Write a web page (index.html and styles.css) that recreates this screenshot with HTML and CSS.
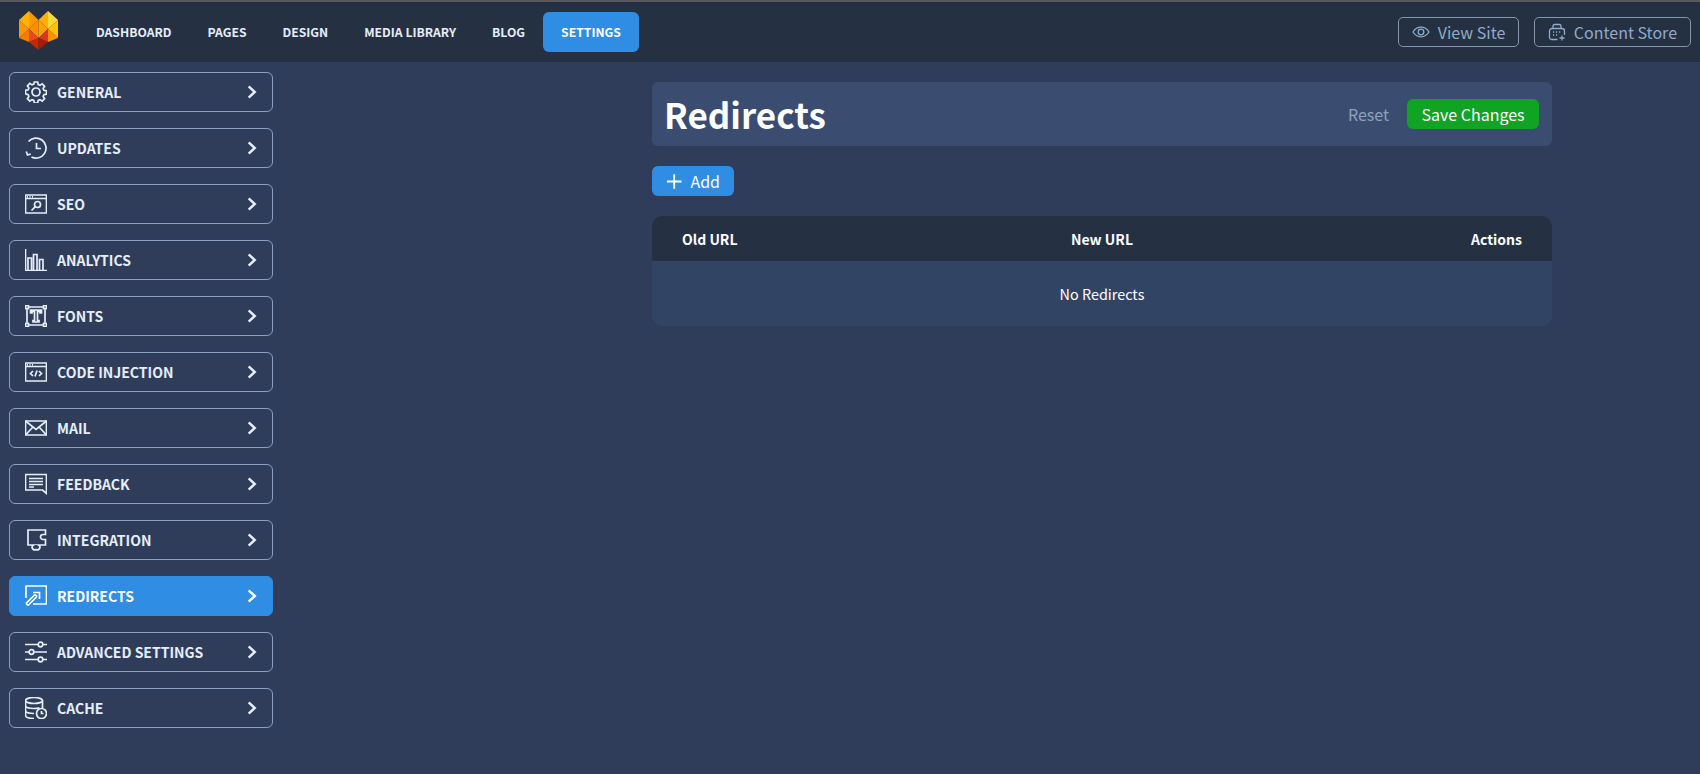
FILE: index.html
```html
<!DOCTYPE html>
<html lang="en">

<head>
     <meta charset="UTF-8">
     <title>Redirects</title>
     <link rel="stylesheet" href="styles.css">
</head>

<body>

     <header class="topbar">
          <svg class="logo" viewBox="0 0 39 39">
               <polygon points="0,9 10,0 10,18" fill="#ffb300" />
               <polygon points="10,0 19.5,9 10,18" fill="#ff9800" />
               <polygon points="19.5,9 29,0 29,18" fill="#ffb300" />
               <polygon points="29,0 39,9 29,18" fill="#ffd83b" />
               <polygon points="10,18 19.5,9 19.500,27" fill="#ff8f00" />
               <polygon points="19.5,9 29,18 19.500,27" fill="#ffa000" />
               <polygon points="0,9 10,18 0,27" fill="#ff9800" />
               <polygon points="39,9 29,18 39,27" fill="#ffc107" />
               <polygon points="0,27 10,18 10,31" fill="#f57c00" />
               <polygon points="10,18 19.5,27 10,31" fill="#e64a19" />
               <polygon points="19.5,27 29,18 29,31" fill="#d8352a" />
               <polygon points="29,18 39,27 29,31" fill="#ff8f00" />
               <polygon points="10,31 19.5,27 19.5,39" fill="#c62800" />
               <polygon points="19.5,27 29,31 19.5,39" fill="#a81c02" />
          </svg>
          <nav class="topnav">
               <a href="#">Dashboard</a>
               <a href="#">Pages</a>
               <a href="#">Design</a>
               <a href="#">Media Library</a>
               <a href="#">Blog</a>
               <a href="#" class="active">Settings</a>
          </nav>
          <div class="top-actions">
               <a href="#" class="outline-btn">
                    <svg viewBox="0 0 18 18">
                         <path d="M1 9c2-3.200 4.700-4.800 8-4.800s6 1.600 8 4.800c-2 3.200-4.700 4.800-8 4.800S3 12.200 1 9z" />
                         <circle cx="9" cy="9" r="2.800" />
                    </svg>
                    View Site
               </a>
               <a href="#" class="outline-btn">
                    <svg viewBox="0 0 18 18">
                         <path d="M5 5.500V3a1.500 1.500 0 0 1 1.500-1.500h5A1.500 1.500 0 0 1 13 3v2.500" />
                         <path d="M9.500 16.500H3.500a2 2 0 0 1-2-2V8A2.500 2.500 0 0 1 4 5.500h10A2.500 2.500 0 0 1 16.500 8v4" />
                         <path d="M5 9h1.200M8 9h1.200M11 9h1.200M5 12h1.200M8 12h1.200M14 12.500v5M11.500 15h5" />
                    </svg>
                    Content Store
               </a>
          </div>
     </header>

     <div class="layout">
          <aside class="sidebar">
               <a href="#" class="side-item">
                    <svg viewBox="0 0 22 22">
                         <path d="M9.300 1h3.400l.5 2.600 1.800.8 2.200-1.500 2.400 2.400-1.500 2.200.8 1.800 2.600.5v3.400l-2.600.5-.8 1.800 1.500 2.200-2.400 2.400-2.200-1.500-1.800.8-.5 2.600H9.300l-.5-2.600-1.800-.8-2.200 1.500-2.400-2.400 1.500-2.200-.8-1.800L.5 12.700V9.300l2.600-.5.8-1.800-1.500-2.200 2.400-2.400L7 3.900l1.800-.8z" />
                         <circle cx="11" cy="11" r="4" />
                    </svg>
                    <span>General</span>
                    <svg class="chevron" viewBox="0 0 9 12"><path d="M1.500 1l5.500 5-5.500 5" /></svg>
               </a>
               <a href="#" class="side-item">
                    <svg viewBox="0 0 22 22">
                         <path d="M3.500 4.500A10 10 0 1 1 6.500 20" />
                         <path d="M1.300 14.500l1.200 3.500 3.300-1" />
                         <path d="M11.500 6v5.500h4.500" />
                    </svg>
                    <span>Updates</span>
                    <svg class="chevron" viewBox="0 0 9 12"><path d="M1.500 1l5.500 5-5.500 5" /></svg>
               </a>
               <a href="#" class="side-item">
                    <svg viewBox="0 0 22 22">
                         <path d="M.5 2h21v18H.5zM.5 5.500h21" />
                         <path d="M2 3.800h1M4.500 3.800h1M7 3.800h1" />
                         <circle cx="12.500" cy="11.500" r="3" />
                         <path d="M10.300 13.700L6.500 17.500" />
                    </svg>
                    <span>SEO</span>
                    <svg class="chevron" viewBox="0 0 9 12"><path d="M1.500 1l5.500 5-5.500 5" /></svg>
               </a>
               <a href="#" class="side-item">
                    <svg viewBox="0 0 22 22">
                         <path d="M.5 0v21.500h21.500" />
                         <path d="M3 21.500V9h3.500v12.500M8.500 21.500V5.500H12v16M14.500 21.500V10.500H18v11" />
                    </svg>
                    <span>Analytics</span>
                    <svg class="chevron" viewBox="0 0 9 12"><path d="M1.500 1l5.500 5-5.500 5" /></svg>
               </a>
               <a href="#" class="side-item">
                    <svg viewBox="0 0 22 22">
                         <path d="M3.500 2h15M3.500 20h15M2 3.500v15M20 3.500v15" />
                         <rect x=".5" y=".5" width="3" height="3" />
                         <rect x="18.500" y=".5" width="3" height="3" />
                         <rect x=".5" y="18.500" width="3" height="3" />
                         <rect x="18.500" y="18.500" width="3" height="3" />
                         <path d="M5.500 5h11v3h-1.500V6.500h-2.500v9h1.500V17h-6v-1.500h1.500v-9H7V8H5.500z" />
                    </svg>
                    <span>Fonts</span>
                    <svg class="chevron" viewBox="0 0 9 12"><path d="M1.500 1l5.500 5-5.500 5" /></svg>
               </a>
               <a href="#" class="side-item">
                    <svg viewBox="0 0 22 22">
                         <path d="M.5 2h21v18H.5zM.5 5.500h21" />
                         <path d="M2 3.800h1M4.500 3.800h1M7 3.800h1" />
                         <path d="M8 10l-2.500 2.500L8 15M14 10l2.500 2.500L14 15M12 9.500l-2 6" />
                    </svg>
                    <span>Code Injection</span>
                    <svg class="chevron" viewBox="0 0 9 12"><path d="M1.500 1l5.500 5-5.500 5" /></svg>
               </a>
               <a href="#" class="side-item">
                    <svg viewBox="0 0 22 22">
                         <path d="M.5 4h21v14H.5z" />
                         <path d="M.5 4L11 12.500 21.500 4M.5 18l7.500-8M21.500 18L14 10" />
                    </svg>
                    <span>Mail</span>
                    <svg class="chevron" viewBox="0 0 9 12"><path d="M1.500 1l5.500 5-5.500 5" /></svg>
               </a>
               <a href="#" class="side-item">
                    <svg viewBox="0 0 22 22">
                         <path d="M.5 1.500h21v19l-4-3.500H.5z" />
                         <path d="M4 5.500h14M4 8.500h14M4 11.500h14M4 14h5" />
                    </svg>
                    <span>Feedback</span>
                    <svg class="chevron" viewBox="0 0 9 12"><path d="M1.500 1l5.500 5-5.500 5" /></svg>
               </a>
               <a href="#" class="side-item">
                    <svg viewBox="0 0 22 22">
                         <path d="M3 1h17.500v4.500h-2.500a2.500 2.500 0 0 0 0 5h2.500v5.500H13.500a2.500 2.500 0 0 1-2.500 4.500 2.500 2.500 0 0 1-2.500-4.500H3z" />
                    </svg>
                    <span>Integration</span>
                    <svg class="chevron" viewBox="0 0 9 12"><path d="M1.500 1l5.500 5-5.500 5" /></svg>
               </a>
               <a href="#" class="side-item active">
                    <svg viewBox="0 0 22 22">
                         <path d="M1 13V1h20.500v18H8" />
                         <path d="M1 18.500L10 9.500M3 20.500L12 11.500M1 18.500l2 2M8 7.500h6.500V14M10 9.500l2 2" />
                    </svg>
                    <span>Redirects</span>
                    <svg class="chevron" viewBox="0 0 9 12"><path d="M1.500 1l5.500 5-5.500 5" /></svg>
               </a>
               <a href="#" class="side-item">
                    <svg viewBox="0 0 22 22">
                         <path d="M0 3.500h13M18 3.500h4M0 11h4M9 11h13M0 18.500h13M18 18.500h4" />
                         <circle cx="15.500" cy="3.500" r="2.300" />
                         <circle cx="6.500" cy="11" r="2.300" />
                         <circle cx="15.500" cy="18.500" r="2.300" />
                    </svg>
                    <span>Advanced Settings</span>
                    <svg class="chevron" viewBox="0 0 9 12"><path d="M1.500 1l5.500 5-5.500 5" /></svg>
               </a>
               <a href="#" class="side-item">
                    <svg viewBox="0 0 22 22">
                         <ellipse cx="9" cy="3.500" rx="8.500" ry="3" />
                         <path d="M.5 3.500v15c0 1.700 3.500 3 8.500 3M17.500 3.500V11M.5 8.500c0 1.700 3.500 3 8.500 3 2 0 4-.2 5.500-.8M.5 13.500c0 1.700 3.500 3 8.500 3" />
                         <circle cx="16.500" cy="16.500" r="5" />
                         <path d="M16.500 14v2.500h2" />
                    </svg>
                    <span>Cache</span>
                    <svg class="chevron" viewBox="0 0 9 12"><path d="M1.500 1l5.500 5-5.500 5" /></svg>
               </a>
          </aside>

          <main class="content">
               <div class="title-bar">
                    <h1>Redirects</h1>
                    <a href="#" class="reset">Reset</a>
                    <button class="save-btn">Save Changes</button>
               </div>

               <button class="add-btn">
                    <svg viewBox="0 0 18 18"><path d="M9 1v16M1 9h16" /></svg>
                    Add
               </button>

               <div class="redirects">
                    <div class="redirects-head">
                         <span>Old URL</span>
                         <span>New URL</span>
                         <span>Actions</span>
                    </div>
                    <div class="redirects-empty">No Redirects</div>
               </div>
          </main>
     </div>

</body>

</html>
```

FILE: styles.css
```css
* {
     box-sizing: border-box;
     margin: 0;
     padding: 0;
}

html,
body {
     height: 100%;
}

body {
     font-family: "Noto Sans CJK SC", "Noto Sans", sans-serif;
     background-color: #2f3d5b;
     color: #fff;
     overflow: hidden;
}

a {
     color: inherit;
     text-decoration: none;
}

svg {
     fill: none;
     stroke: currentColor;
}

.topbar {
     height: 62px;
     border-top: 2px solid #5a5a5e;
     background-color: #253043;
     display: flex;
     align-items: center;
     padding: 0 9px 0 19px;
}

.logo {
     width: 39px;
     height: 39px;
     stroke: none;
     margin-top: -4px;
}

.topnav {
     display: flex;
     align-items: center;
     margin-left: 20px;
}

.topnav a {
     height: 40px;
     line-height: 40px;
     padding: 0 18px;
     border-radius: 6px;
     font-size: 12.2px;
     font-weight: 700;
     text-transform: uppercase;
     color: #e6eefb;
}

.topnav a.active {
     background-color: #2f8de4;
     color: #fff;
}

.top-actions {
     margin-left: auto;
     display: flex;
     gap: 15px;
}

.outline-btn {
     height: 30px;
     display: flex;
     align-items: center;
     gap: 7.5px;
     padding: 0 13px;
     border: 1px solid #8296b0;
     border-radius: 5px;
     font-size: 16px;
     color: #8eabc9;
}

.outline-btn svg {
     width: 18px;
     height: 18px;
     stroke-width: 1.3;
}

.layout {
     display: flex;
}

.sidebar {
     width: 273px;
     padding: 10px 0 0 9px;
     display: flex;
     flex-direction: column;
     gap: 16px;
     flex-shrink: 0;
}

.side-item {
     height: 40px;
     display: flex;
     align-items: center;
     padding: 0 15px;
     border: 1px solid #8a9fc6;
     border-radius: 6px;
     font-size: 14px;
     font-weight: 700;
     text-transform: uppercase;
     color: #e6eefb;
}

.side-item svg {
     width: 22px;
     height: 22px;
     stroke-width: 1.7;
     margin-right: 10px;
     flex-shrink: 0;
}

.side-item .chevron {
     width: 10px;
     height: 14px;
     stroke-width: 2.2;
     margin: 0 0 0 auto;
}

.side-item.active {
     background-color: #2f8de4;
     border-color: #2f8de4;
     color: #fff;
}

.content {
     width: 900px;
     margin-left: 379px;
     padding-top: 20px;
}

.title-bar {
     height: 64px;
     display: flex;
     align-items: center;
     padding: 0 13px 0 12px;
     background-color: #3a4d70;
     border-radius: 6px;
}

.title-bar h1 {
     font-size: 35px;
     font-weight: 700;
     margin-right: auto;
     margin-top: -2px;
}

.reset {
     font-size: 16px;
     color: #8ea2bd;
     margin-right: 18px;
}

.save-btn {
     height: 30px;
     width: 132px;
     border: 0;
     border-radius: 6px;
     background-color: #10a324;
     color: #fff;
     font-family: inherit;
     font-size: 16px;
}

.add-btn {
     height: 30px;
     width: 82px;
     margin-top: 20px;
     display: flex;
     align-items: center;
     gap: 8px;
     padding: 0 14px;
     border: 0;
     border-radius: 6px;
     background-color: #2f8de4;
     color: #fff;
     font-family: inherit;
     font-size: 16px;
}

.add-btn svg {
     width: 17px;
     height: 17px;
     stroke-width: 2;
}

.redirects {
     margin-top: 20px;
     border-radius: 10px;
     overflow: hidden;
     background-color: #324463;
}

.redirects-head {
     height: 45px;
     display: grid;
     grid-template-columns: 1fr 1fr 1fr;
     align-items: center;
     padding: 0 30px;
     background-color: #253043;
     font-size: 14px;
     font-weight: 700;
}

.redirects-head span:nth-child(2) {
     text-align: center;
}

.redirects-head span:nth-child(3) {
     text-align: right;
}

.redirects-empty {
     height: 65px;
     display: flex;
     align-items: center;
     justify-content: center;
     font-size: 14.4px;
}
```
